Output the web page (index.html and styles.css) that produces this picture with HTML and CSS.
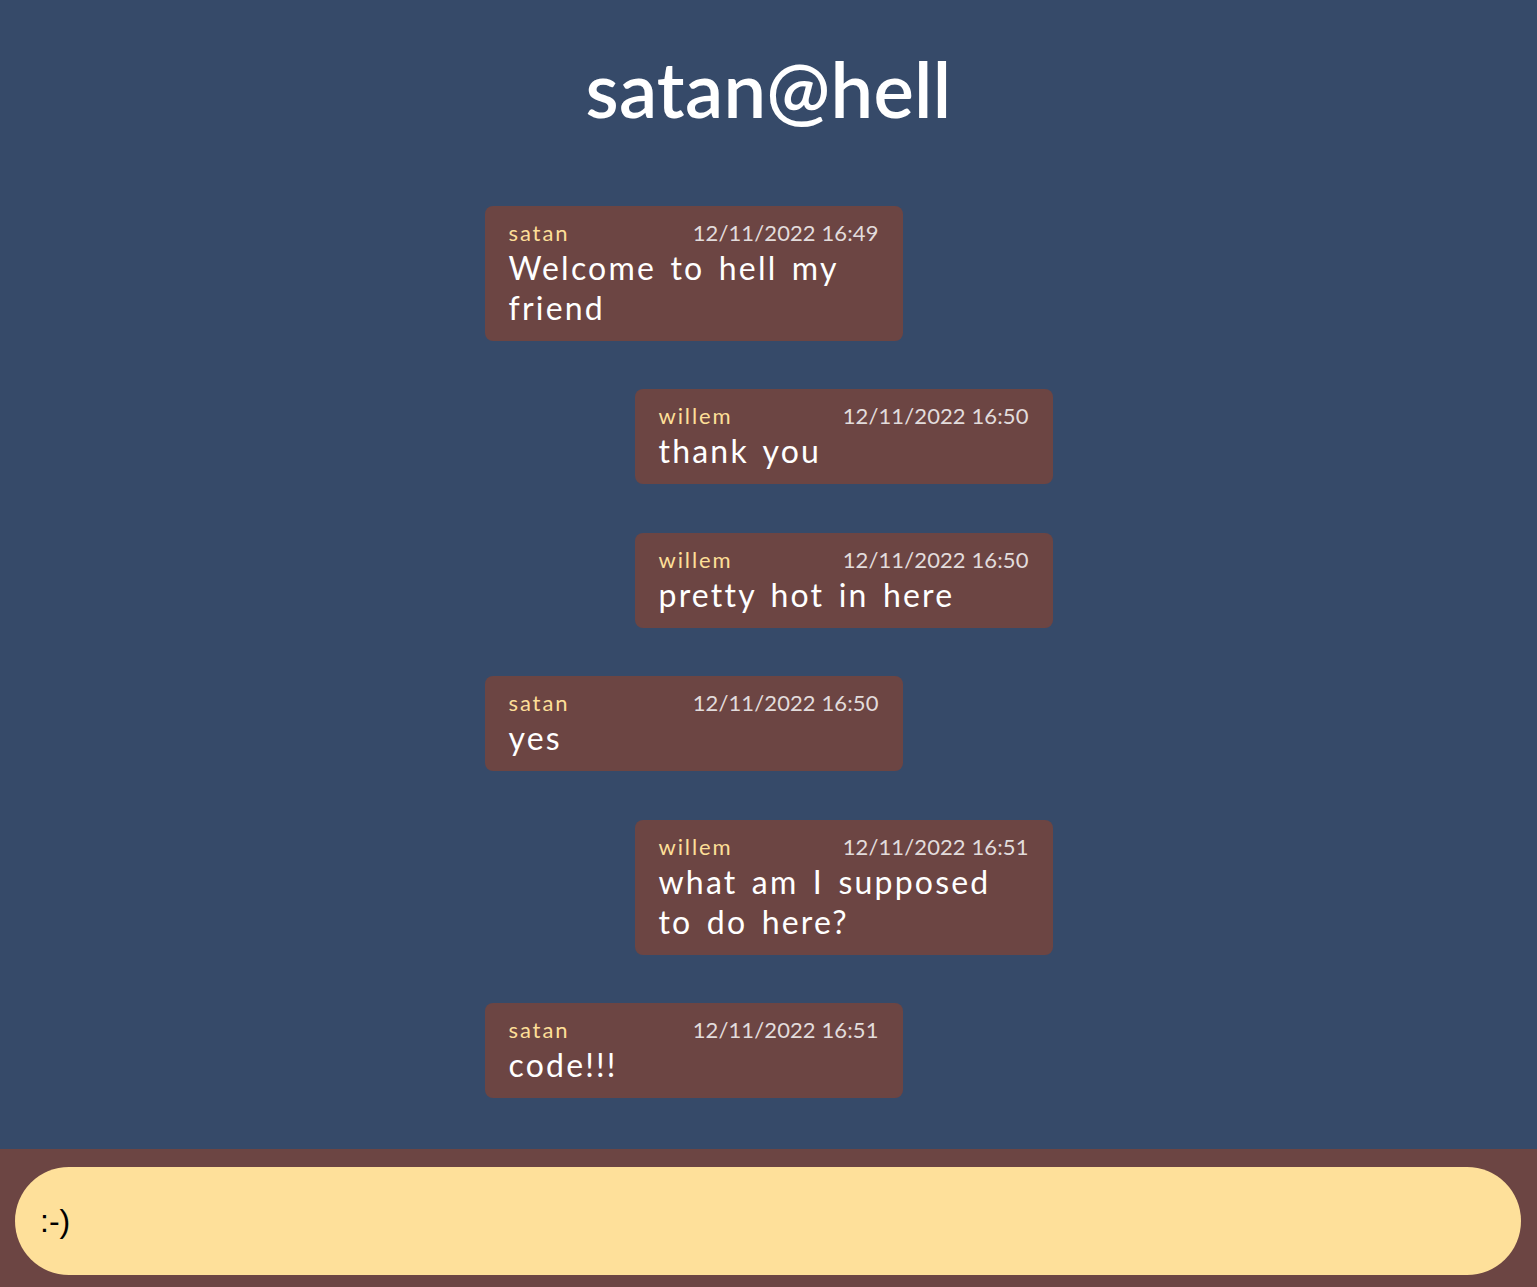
FILE: index.html
```html
<!DOCTYPE html>
<html lang="en">
<head>
<meta charset="utf-8">
<title>satan@hell</title>
<link rel="stylesheet" href="styles.css">
</head>
<body>
<div class="page">
  <header class="header">
    <h1 class="title">satan@hell</h1>
  </header>
  <main class="chat">
    <div class="msg msg-left">
      <div class="meta"><span class="name">satan</span><span class="time">12/11/2022 16:49</span></div>
      <div class="text">Welcome to hell my friend</div>
    </div>
    <div class="msg msg-right">
      <div class="meta"><span class="name">willem</span><span class="time">12/11/2022 16:50</span></div>
      <div class="text">thank you</div>
    </div>
    <div class="msg msg-right">
      <div class="meta"><span class="name">willem</span><span class="time">12/11/2022 16:50</span></div>
      <div class="text">pretty hot in here</div>
    </div>
    <div class="msg msg-left">
      <div class="meta"><span class="name">satan</span><span class="time">12/11/2022 16:50</span></div>
      <div class="text">yes</div>
    </div>
    <div class="msg msg-right">
      <div class="meta"><span class="name">willem</span><span class="time">12/11/2022 16:51</span></div>
      <div class="text">what am I supposed to do here?</div>
    </div>
    <div class="msg msg-left">
      <div class="meta"><span class="name">satan</span><span class="time">12/11/2022 16:51</span></div>
      <div class="text">code!!!</div>
    </div>
  </main>
  <footer class="footer">
    <input class="input" type="text" value=":-)">
  </footer>
</div>
</body>
</html>
```
FILE: styles.css
```css
html, body {
  margin: 0;
  padding: 0;
}
body {
  background: #364a69;
  font-family: Lato, "Noto Sans", sans-serif;
  color: #ffffff;
}
.page {
  display: flex;
  flex-direction: column;
  min-height: 100vh;
}
.header {
  display: flex;
  justify-content: center;
  padding-top: 41px;
  height: 206px;
  box-sizing: border-box;
}
.title {
  margin: 0;
  font-size: 76px;
  font-weight: 600;
  line-height: 96px;
  letter-spacing: 0.3px;
  color: #ffffff;
}
.chat {
  width: 568px;
  margin: 0 auto;
  display: flex;
  flex-direction: column;
  gap: 48.4px;
  padding-bottom: 48px;
  flex: 1;
}
.msg {
  width: 418px;
  box-sizing: border-box;
  background: #6c4543;
  border-radius: 8px;
  padding: 12px 24px 13px 24px;
}
.msg-left { align-self: flex-start; }
.msg-right { align-self: flex-end; }
.meta {
  display: flex;
  justify-content: space-between;
  align-items: baseline;
  height: 30px;
  line-height: 30px;
  font-size: 22px;
}
.name {
  color: #fddf98;
  letter-spacing: 1.9px;
}
.time {
  color: #e2dcdc;
  letter-spacing: 0.1px;
}
.text {
  font-size: 32px;
  line-height: 40px;
  letter-spacing: 2.2px;
  word-spacing: 4px;
  color: #ffffff;
}
.footer {
  background: #6c4543;
  padding: 18px 16px 12px 15px;
}
.input {
  display: block;
  width: 100%;
  box-sizing: border-box;
  height: 108px;
  border: none;
  outline: none;
  border-radius: 54px;
  background: #fee09a;
  padding: 0 25px;
  font-family: "Liberation Sans", Arial, sans-serif;
  font-size: 32px;
  color: #000000;
}
```
